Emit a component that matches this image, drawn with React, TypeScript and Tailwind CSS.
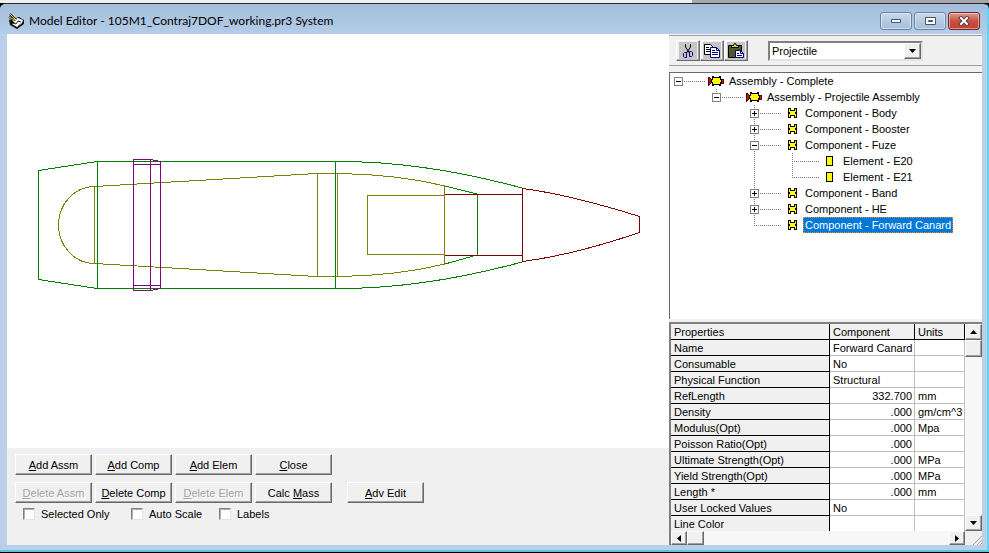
import React from "react";

type TreeItem = {
  label: string;
  depth: number;
  kind: "assembly" | "component" | "element";
  sign?: "+" | "-";
  above?: boolean;
  below?: boolean;
  selected?: boolean;
};

const tree: TreeItem[] = [
  { label: "Assembly - Complete", depth: 0, kind: "assembly", sign: "-" },
  { label: "Assembly - Projectile Assembly", depth: 1, kind: "assembly", sign: "-", above: true },
  { label: "Component - Body", depth: 2, kind: "component", sign: "+", above: true, below: true },
  { label: "Component - Booster", depth: 2, kind: "component", sign: "+", above: true, below: true },
  { label: "Component - Fuze", depth: 2, kind: "component", sign: "-", above: true, below: true },
  { label: "Element - E20", depth: 3, kind: "element", above: true, below: true },
  { label: "Element - E21", depth: 3, kind: "element", above: true },
  { label: "Component - Band", depth: 2, kind: "component", sign: "+", above: true, below: true },
  { label: "Component - HE", depth: 2, kind: "component", sign: "+", above: true, below: true },
  { label: "Component - Forward Canard", depth: 2, kind: "component", above: true, selected: true },
];

const properties: [string, string, string][] = [
  ["Name", "Forward Canard", ""],
  ["Consumable", "No", ""],
  ["Physical Function", "Structural", ""],
  ["RefLength", "332.700", "mm"],
  ["Density", ".000", "gm/cm^3"],
  ["Modulus(Opt)", ".000", "Mpa"],
  ["Poisson Ratio(Opt)", ".000", ""],
  ["Ultimate Strength(Opt)", ".000", "MPa"],
  ["Yield Strength(Opt)", ".000", "MPa"],
  ["Length *", ".000", "mm"],
  ["User Locked Values", "No", ""],
  ["Line Color", "", ""],
];

const raised =
  "border border-t-white border-l-white border-r-[#696969] border-b-[#696969] bg-[#f0f0f0] shadow-[inset_-1px_-1px_0_#a0a0a0]";

function AppIcon() {
  return (
    <svg width="17" height="16" viewBox="0 0 17 16" className="shrink-0" aria-hidden="true">
      <path d="M1 7l4-1 6-2 5 3v4l-7 5-7-4z" fill="#111" />
      <path d="M4 7l6-2 5 2-1 3-5 4-5-3 3-1z" fill="#fff" />
      <path d="M5 10l3 1 2-3 3 1" fill="none" stroke="#222" />
      <path d="M10 13l4-3" stroke="#777" />
      <path d="M2 1l6 6M1 4l6 3" stroke="#111" strokeWidth="2" />
      <path d="M2 1l6 6M1 4l6 3" stroke="#e8df3a" />
    </svg>
  );
}

function ScissorsIcon() {
  return (
    <svg width="18" height="18" viewBox="0 0 18 18" fill="none" aria-hidden="true">
      <path d="M0 0h18v18H0z" fill="#c6c6c6" />
      <path d="M6.500 2v3l4 6M11.500 2v3l-4 6" stroke="#000" />
      <path d="M7.500 10.500h-2l-1 1v3l1 1h2v-5M10.500 9.500h2l1 1v3l-1 1h-2z" stroke="#000080" />
    </svg>
  );
}

function CopyIcon() {
  return (
    <svg width="18" height="18" viewBox="0 0 18 18" fill="none" aria-hidden="true">
      <path d="M0 0h18v18H0z" fill="#c6c6c6" />
      <path d="M1.500 2.500h6l3 3v7h-9z" fill="#fff" stroke="#000" />
      <path d="M3 5.500h3M3 7.500h5M3 9.500h5" stroke="#000" />
      <path d="M7.500 5.500h6l3 3v7h-9z" fill="#fff" stroke="#000080" />
      <path d="M13.500 5.500v3h3M9 8.500h3M9 10.500h6M9 12.500h6" stroke="#000080" />
    </svg>
  );
}

function PasteIcon() {
  return (
    <svg width="18" height="18" viewBox="0 0 18 18" fill="none" aria-hidden="true">
      <path d="M0 0h18v18H0z" fill="#c6c6c6" />
      <path d="M1.500 3.500h13v12h-13z" fill="#55552a" stroke="#000" />
      <path d="M4.500 5.500v-2h2l1-2h1l1 2h2v2z" fill="#d6d64b" stroke="#000" />
      <path d="M8.500 8.500h5l3 3v4h-8z" fill="#fff" stroke="#000080" />
      <path d="M13.500 8.500v3h3M10 11.500h2M10 13.500h5" stroke="#000080" />
    </svg>
  );
}

function NodeIcon({ kind }: { kind: TreeItem["kind"] }) {
  return (
    <svg width="18" height="16" viewBox="0 0 18 16" shapeRendering="crispEdges" className="shrink-0" aria-hidden="true">
      {kind === "assembly" && (
        <>
          <path d="M1 4h1l3 3v2l-3 3H1z" fill="#c01010" stroke="#500" />
          <path d="M14 6h2v4h-2z" fill="#e01010" stroke="#600" />
          <path d="M5 3h2v1h5V3h2v3h1v4h-1v3h-2v-1H7v1H5v-3H4V6h1z" fill="#000" />
          <path d="M6 5h7v2h1v2h-1v2H6V9H5V7h1z" fill="#ff0" />
        </>
      )}
      {kind === "component" && (
        <>
          <path d="M5 3h3v2h3V3h3v10h-3v-2H8v2H5z" fill="#000" />
          <path d="M6 4h1v2h5V4h1v3h-1v2h1v3h-1v-2H7v2H6V9h1V7H6z" fill="#ff0" />
        </>
      )}
      {kind === "element" && <path d="M5.500 3.500h6v9h-6z" fill="#ff0" stroke="#000" />}
    </svg>
  );
}

function Connector({ item }: { item: TreeItem }) {
  return (
    <svg width="33" height="16" viewBox="0 0 33 16" shapeRendering="crispEdges" className="shrink-0" aria-hidden="true">
      <g stroke="#808080" strokeDasharray="1 1">
        {item.above && <path d="M4.500 0v8" />}
        {item.below && <path d="M4.500 8v8" />}
        <path d="M4 8.500h28" />
      </g>
      {item.sign && (
        <>
          <path d="M.5 4.500h8v8h-8z" fill="#fff" stroke="#808080" />
          <path d={item.sign === "+" ? "M2 8.500h5M4.500 6v5" : "M2 8.500h5"} stroke="#000" />
        </>
      )}
    </svg>
  );
}

const indent = ["pl-0", "pl-[38px]", "pl-[76px]", "pl-[114px]"];

function TreeRow({ item }: { item: TreeItem }) {
  return (
    <li className={`flex h-4 items-center ${item.kind === "element" ? "pl-[76px]" : indent[item.depth]}`}>
      {item.kind === "element" && (
        <svg width="38" height="16" shapeRendering="crispEdges" className="shrink-0" aria-hidden="true">
          <path d="M4.500 0v16" stroke="#808080" strokeDasharray="1 1" />
        </svg>
      )}
      <Connector item={item} />
      <span className="flex w-[20px] shrink-0">
        <NodeIcon kind={item.kind} />
      </span>
      <span
        className={
          item.selected
            ? "border border-dotted border-[#e08a30] bg-[#0078d7] px-px leading-[14px] whitespace-nowrap text-white"
            : "px-0.5 leading-4 whitespace-nowrap"
        }
      >
        {item.label}
      </span>
    </li>
  );
}

function Drawing() {
  return (
    <svg width="662" height="412" viewBox="7 34 662 412" fill="none" shapeRendering="crispEdges" role="img" aria-label="Projectile cross section">
      <g stroke="#808000">
        <path d="M94.500 186.500A36 38.500 0 0 0 94.500 263.500z" />
        <path d="M94.500 186.500L317 173.500h22C378 174 412 178 445 186" />
        <path d="M94.500 263.500L317 276.500h22C378 276 412 272 445 264" />
        <path d="M317.500 173v103M337.500 173v103M444.500 186v78M444 195.500h-76.500v59H444" />
      </g>
      <g stroke="#008000">
        <path d="M38.500 170.500L97 161.500h238C405 161 467 173 522 188" />
        <path d="M38.500 170v109.500L97 288.500h238C405 289 467 277 522 262" />
        <path d="M97.500 161v127M335.500 161v127M477.500 194v61M445 186l32 8M445 264l32-9" />
      </g>
      <path d="M133.500 159.500h17l10 2v127l-10 2h-17zM150.500 159v131M133 164.500h27M133 285.500h27" stroke="#800080" />
      <path d="M445 194.500h77M445 255.500h77M522.500 188.500v73C565 256 603 245 639.500 232.500v-16C603 205 565 194 522.500 188.500z" stroke="#800000" />
    </svg>
  );
}

function PushButton({ before = "", hot, after, disabled = false }: { before?: string; hot: string; after: string; disabled?: boolean }) {
  return (
    <button
      type="button"
      disabled={disabled}
      className={`h-[21px] w-[77px] leading-4 whitespace-nowrap disabled:text-[#a0a0a0] disabled:[text-shadow:1px_1px_0_#fff] ${raised}`}
    >
      {before}
      <u>{hot}</u>
      {after}
    </button>
  );
}

function Check({ label }: { label: string }) {
  return (
    <label className="flex items-center gap-1.5">
      <input
        type="checkbox"
        className="size-3 appearance-none border border-t-[#808080] border-r-[#e3e3e3] border-b-[#e3e3e3] border-l-[#808080] bg-white shadow-[inset_1px_1px_0_#b0b0b0]"
      />
      {label}
    </label>
  );
}

const arrows = {
  up: "M0 4h7L3.500 0z",
  down: "M0 0h7L3.500 4z",
  left: "M4 0v7L0 3.500z",
  right: "M0 0v7L4 3.500z",
};

function Arrow({ to }: { to: keyof typeof arrows }) {
  const wide = to === "up" || to === "down";
  return (
    <svg width={wide ? 7 : 4} height={wide ? 4 : 7} aria-hidden="true">
      <path d={arrows[to]} />
    </svg>
  );
}

function ScrollButton({ to }: { to: keyof typeof arrows }) {
  return (
    <button type="button" aria-label={`Scroll ${to}`} className={`flex shrink-0 items-center justify-center ${to === "up" || to === "down" ? "h-4 w-full" : "h-full w-4"} ${raised}`}>
      <Arrow to={to} />
    </button>
  );
}

const caption =
  "flex h-[18px] w-8 items-center justify-center rounded-[3px] border shadow-[inset_0_0_0_1px_rgba(255,255,255,0.45)]";
const cell = "p-0 pt-px pl-[3px] leading-[14px] font-normal whitespace-nowrap";

export default function App() {
  return (
    <div className="flex h-screen flex-col bg-black font-['Liberation_Sans',Arial,sans-serif] text-[11px] leading-4 text-black">
      <div className="flex h-[3px] shrink-0">
        <div className="w-[70%] bg-[#f0f0f0]" />
        <div className="flex-1 bg-[#a8a8a8]" />
      </div>
      <div className="mb-px flex min-h-0 flex-1 flex-col rounded-t-md border-t border-r-2 border-b-2 border-t-[#202830] border-r-[#5fd3f5] border-b-[#5fc4e4] bg-[#bad0e9]">
        <header className="flex h-[30px] shrink-0 items-center gap-1 rounded-t-md bg-linear-to-b from-[#a3bddb] to-[#b4cce7] pt-1 pr-[7px] pl-2">
          <AppIcon />
          <h1 className="flex-1 font-[Lato,'Open_Sans',sans-serif] text-[12px] whitespace-nowrap">
            Model Editor - 105M1_Contraj7DOF_working.pr3 System
          </h1>
          <div className="flex gap-0.5">
            <button type="button" aria-label="Minimize" className={`${caption} border-[#6d8299] bg-linear-to-b from-[#c6d9ec] via-[#b4cbe3] to-[#a5c0dc]`}>
              <svg width="12" height="6" aria-hidden="true"><path d="M1.500 1.500h9v3h-9z" fill="#fff" stroke="#4a5564" /></svg>
            </button>
            <button type="button" aria-label="Maximize" className={`${caption} border-[#6d8299] bg-linear-to-b from-[#c6d9ec] via-[#b4cbe3] to-[#a5c0dc]`}>
              <svg width="11" height="9" aria-hidden="true"><path d="M.5.5h10v7H.5z" fill="#fff" stroke="#4a5564" /><path d="M3.500 3.500h4v1h-4z" fill="#9bb5d1" stroke="#4a5564" /></svg>
            </button>
            <button type="button" aria-label="Close window" className={`${caption} border-[#6e2a2a] bg-linear-to-b from-[#dd9a8e] via-[#c8503f] to-[#c4412f]`}>
              <svg width="12" height="10" aria-hidden="true"><path d="M3 2l6 6M9 2L3 8" stroke="#5a3a40" strokeWidth="4" strokeLinecap="square" /><path d="M3 2l6 6M9 2L3 8" stroke="#fff" strokeWidth="2" strokeLinecap="square" /></svg>
            </button>
          </div>
        </header>

        <div className="mr-[5px] mb-[5px] ml-[7px] flex min-h-0 flex-1 bg-[#f0f0f0]">
          <main className="flex min-w-0 flex-1 flex-col">
            <div className="min-h-0 flex-1 overflow-hidden bg-white">
              <Drawing />
            </div>
            <div className="flex h-[97px] shrink-0 flex-col px-2 pt-1.5">
              <div className="flex gap-[3px]">
                <PushButton hot="A" after="dd Assm" />
                <PushButton hot="A" after="dd Comp" />
                <PushButton hot="A" after="dd Elem" />
                <PushButton hot="C" after="lose" />
              </div>
              <div className="mt-[7px] flex gap-[3px]">
                <PushButton hot="D" after="elete Assm" disabled />
                <PushButton hot="D" after="elete Comp" />
                <PushButton hot="D" after="elete Elem" disabled />
                <PushButton before="Calc " hot="M" after="ass" />
                <div className="w-[9px]" />
                <PushButton hot="A" after="dv Edit" />
              </div>
              <div className="mt-[3px] flex pl-2">
                <div className="w-[108px]"><Check label="Selected Only" /></div>
                <div className="w-[88px]"><Check label="Auto Scale" /></div>
                <Check label="Labels" />
              </div>
            </div>
          </main>

          <aside className="flex w-[313px] shrink-0 flex-col">
            <div className="mt-px flex h-[31px] shrink-0 items-center border-y border-t-[#a0a0a0] border-b-[#a0a0a0] pl-[7px]">
              <button type="button" aria-label="Cut" className={`flex h-[21px] w-6 items-center justify-center ${raised}`}><ScissorsIcon /></button>
              <button type="button" aria-label="Copy" className={`flex h-[21px] w-6 items-center justify-center ${raised}`}><CopyIcon /></button>
              <button type="button" aria-label="Paste" className={`flex h-[21px] w-6 items-center justify-center ${raised}`}><PasteIcon /></button>
              <div className="relative ml-5 h-5 w-[155px] border-2 border-t-[#808080] border-r-[#e3e3e3] border-b-[#e3e3e3] border-l-[#808080] bg-white">
                <select aria-label="System type" className="block h-4 w-full appearance-none pl-0.5 leading-4">
                  <option>Projectile</option>
                </select>
                <span className={`pointer-events-none absolute top-0 right-0 flex h-4 w-[17px] items-center justify-center ${raised}`}>
                  <Arrow to="down" />
                </span>
              </div>
            </div>
            <ul className="mt-1.5 min-h-0 flex-1 border-t border-l border-[#696969] bg-white pl-1">
              {tree.map((item) => (
                <TreeRow key={item.label} item={item} />
              ))}
            </ul>

            <section className="mt-[3px] flex h-[223px] shrink-0 flex-col border-t-2 border-l-2 border-[#808080]">
              <div className="flex min-h-0 flex-1">
                <div className="min-w-0 flex-1 overflow-hidden">
                  <table className="w-full table-fixed border-separate border-spacing-0 bg-white text-left">
                    <colgroup>
                      <col className="w-[159px]" />
                      <col className="w-[85px]" />
                      <col />
                    </colgroup>
                    <thead>
                      <tr className="h-4 bg-[#f0f0f0]">
                        {["Properties", "Component", "Units"].map((h) => (
                          <th key={h} scope="col" className={`border-r border-b border-black ${cell}`}>{h}</th>
                        ))}
                      </tr>
                    </thead>
                    <tbody>
                      {properties.map(([name, value, unit]) => (
                        <tr key={name} className="h-4">
                          <th scope="row" className={`border-r border-b border-black bg-[#f0f0f0] ${cell}`}>{name}</th>
                          <td className={`border-r border-b border-[#c0c0c0] ${cell} ${value.includes(".") ? "pr-0.5 text-right" : ""}`}>{value}</td>
                          <td className={`overflow-hidden border-r border-b border-[#c0c0c0] ${cell}`}>{unit}</td>
                        </tr>
                      ))}
                    </tbody>
                  </table>
                </div>
                <div className="flex w-[17px] shrink-0 flex-col bg-[#f7f7f7]">
                  <ScrollButton to="up" />
                  <div className={`h-[17px] ${raised}`} />
                  <div className="flex-1" />
                  <ScrollButton to="down" />
                </div>
              </div>
              <div className="flex h-[14px] shrink-0 bg-[#f7f7f7]">
                <ScrollButton to="left" />
                <div className={`w-[17px] ${raised}`} />
                <div className="flex-1" />
                <ScrollButton to="right" />
                <div className="flex w-[17px] items-end justify-end bg-[#f0f0f0]">
                  <svg width="10" height="10" stroke="#a0a0a0" aria-hidden="true"><path d="M1 10l9-9M5 10l5-5M8 10l2-2" /></svg>
                </div>
              </div>
            </section>
          </aside>
        </div>
      </div>
    </div>
  );
}
